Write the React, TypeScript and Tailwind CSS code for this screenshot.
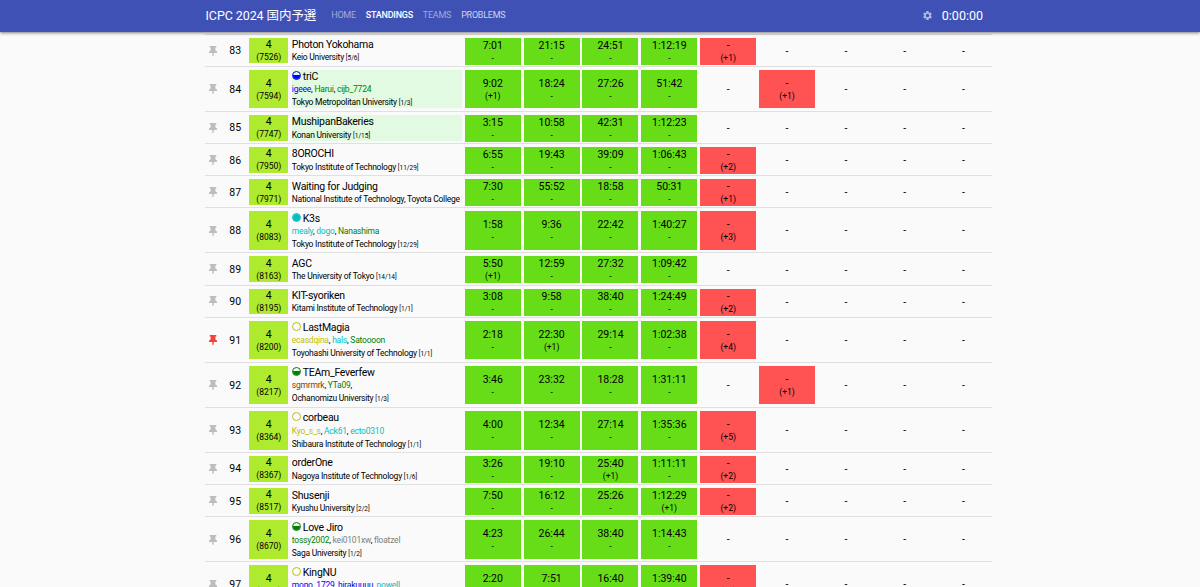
import clsx from 'clsx'

type Member = { name: string; color: string }

type Team = {
  rank: number
  penalty: number
  name: string
  university: string
  place: string
  rating?: { color: string; fill: number }
  members?: Member[]
  results: string[]
  pinned?: boolean
  highlight?: boolean
}

const BLUE = 'text-[#0000ff]'
const GREEN = 'text-[#008000]'
const CYAN = 'text-[#00c0c0]'
const YELLOW = 'text-[#c0c000]'
const BROWN = 'text-[#804000]'
const GRAY = 'text-[#808080]'

// results: "time" = solved, "time+n" = solved with n misses, "+n" = only misses, "" = untouched
const teams: Team[] = [
  { rank: 83, penalty: 7526, name: 'Photon Yokohama', university: 'Keio University', place: '5/6', results: ['7:01', '21:15', '24:51', '1:12:19', '+1'] },
  {
    rank: 84, penalty: 7594, name: 'triC', university: 'Tokyo Metropolitan University', place: '1/3', highlight: true,
    rating: { color: BLUE, fill: 0.7 },
    members: [{ name: 'igeee', color: BLUE }, { name: 'Harui', color: GREEN }, { name: 'cijb_7724', color: GREEN }],
    results: ['9:02+1', '18:24', '27:26', '51:42', '', '+1'],
  },
  { rank: 85, penalty: 7747, name: 'MushipanBakeries', university: 'Konan University', place: '1/15', highlight: true, results: ['3:15', '10:58', '42:31', '1:12:23'] },
  { rank: 86, penalty: 7950, name: '8OROCHI', university: 'Tokyo Institute of Technology', place: '11/29', results: ['6:55', '19:43', '39:09', '1:06:43', '+2'] },
  { rank: 87, penalty: 7971, name: 'Waiting for Judging', university: 'National Institute of Technology, Toyota College', place: '1/1', results: ['7:30', '55:52', '18:58', '50:31', '+1'] },
  {
    rank: 88, penalty: 8083, name: 'K3s', university: 'Tokyo Institute of Technology', place: '12/29',
    rating: { color: CYAN, fill: 1 },
    members: [{ name: 'mealy', color: CYAN }, { name: 'dogo', color: CYAN }, { name: 'Nanashima', color: GREEN }],
    results: ['1:58', '9:36', '22:42', '1:40:27', '+3'],
  },
  { rank: 89, penalty: 8163, name: 'AGC', university: 'The University of Tokyo', place: '14/14', results: ['5:50+1', '12:59', '27:32', '1:09:42'] },
  { rank: 90, penalty: 8195, name: 'KIT-syoriken', university: 'Kitami Institute of Technology', place: '1/1', results: ['3:08', '9:58', '38:40', '1:24:49', '+2'] },
  {
    rank: 91, penalty: 8200, name: 'LastMagia', university: 'Toyohashi University of Technology', place: '1/1', pinned: true,
    rating: { color: YELLOW, fill: 0 },
    members: [{ name: 'ecasdqina', color: YELLOW }, { name: 'hals', color: CYAN }, { name: 'Satoooon', color: GREEN }],
    results: ['2:18', '22:30+1', '29:14', '1:02:38', '+4'],
  },
  {
    rank: 92, penalty: 8217, name: 'TEAm_Feverfew', university: 'Ochanomizu University', place: '1/3',
    rating: { color: GREEN, fill: 0.6 },
    members: [{ name: 'sgmrmrk', color: BROWN }, { name: 'YTa09', color: GREEN }, { name: '', color: GRAY }],
    results: ['3:46', '23:32', '18:28', '1:31:11', '', '+1'],
  },
  {
    rank: 93, penalty: 8364, name: 'corbeau', university: 'Shibaura Institute of Technology', place: '1/1',
    rating: { color: YELLOW, fill: 0 },
    members: [{ name: 'Kyo_s_s', color: YELLOW }, { name: 'Ack61', color: CYAN }, { name: 'ecto0310', color: CYAN }],
    results: ['4:00', '12:34', '27:14', '1:35:36', '+5'],
  },
  { rank: 94, penalty: 8367, name: 'orderOne', university: 'Nagoya Institute of Technology', place: '1/6', results: ['3:26', '19:10', '25:40+1', '1:11:11', '+2'] },
  { rank: 95, penalty: 8517, name: 'Shusenji', university: 'Kyushu University', place: '2/2', results: ['7:50', '16:12', '25:26', '1:12:29+1', '+2'] },
  {
    rank: 96, penalty: 8670, name: 'Love Jiro', university: 'Saga University', place: '1/2',
    rating: { color: GREEN, fill: 0.6 },
    members: [{ name: 'tossy2002', color: GREEN }, { name: 'kei0101xw', color: GRAY }, { name: 'floatzel', color: GRAY }],
    results: ['4:23', '26:44', '38:40', '1:14:43'],
  },
  {
    rank: 97, penalty: 8779, name: 'KingNU', university: 'Nagoya University', place: '3/9',
    rating: { color: YELLOW, fill: 0 },
    members: [{ name: 'mono_1729', color: BLUE }, { name: 'hirakuuuu', color: BLUE }, { name: 'powell', color: CYAN }],
    results: ['2:20', '7:51', '16:40', '1:39:40', '+1'],
  },
]

const PROBLEMS = [0, 1, 2, 3, 4, 5, 6, 7, 8]

function PinIcon({ active }: { active?: boolean }) {
  return (
    <svg viewBox="0 0 8 10" className={clsx('h-[10px] w-2', active ? 'text-[#f44336]' : 'text-[#bdbdbd]')}>
      <path
        fill="currentColor"
        d="M.7 0h6.600v1.500H6.400v2.900L8 5.600v1.300H4.700v2.500L4 10l-.7-.6V6.900H0V5.600l1.600-1.200V1.500H.7z"
      />
    </svg>
  )
}

function SettingsIcon() {
  return (
    <svg viewBox="0 0 24 24" className="h-[11px] w-[11px] text-white/60">
      <path
        fill="currentColor"
        d="M19.140 12.940c.04-.3.060-.610.060-.940 0-.320-.020-.640-.070-.940l2.030-1.580c.180-.140.230-.410.120-.610l-1.920-3.320c-.120-.220-.370-.290-.590-.220l-2.390.960c-.5-.380-1.030-.7-1.620-.940l-.360-2.540c-.040-.240-.240-.410-.480-.410h-3.840c-.240 0-.430.170-.470.410l-.360 2.540c-.590.240-1.130.570-1.620.940l-2.390-.960c-.220-.080-.470 0-.590.220L2.740 8.870c-.120.210-.080.470.120.610l2.030 1.580c-.050.3-.090.630-.090.940s.020.640.070.940l-2.030 1.580c-.180.140-.230.410-.120.610l1.920 3.320c.120.220.370.290.590.220l2.390-.960c.5.380 1.030.7 1.620.940l.360 2.540c.050.240.240.410.480.410h3.840c.240 0 .440-.170.470-.410l.360-2.540c.590-.240 1.130-.560 1.620-.940l2.390.960c.220.080.470 0 .590-.220l1.920-3.320c.120-.220.070-.470-.120-.610zM12 15.600c-1.980 0-3.600-1.620-3.600-3.600s1.620-3.600 3.600-3.600 3.600 1.620 3.600 3.600-1.620 3.600-3.600 3.600z"
      />
    </svg>
  )
}

function RatingMark({ color, fill }: { color: string; fill: number }) {
  return (
    <span className={clsx('relative -top-[1.500px] mr-[2px] inline-block size-[9px] overflow-hidden rounded-full border align-middle', color)}>
      <span className="absolute inset-x-0 bottom-0 bg-current" style={{ height: `${fill * 100}%` }} />
    </span>
  )
}

function ResultCell({ result }: { result?: string }) {
  if (!result) {
    return <div className="flex items-center justify-center pt-px text-[10.500px]">-</div>
  }
  const [time, misses] = result.split('+')
  return (
    <div className={clsx('flex flex-col items-center justify-center', time ? 'bg-[#66dd17]' : 'bg-[#ff5252]')}>
      <div className="pt-px text-[10.500px] leading-[13px]">{time || '-'}</div>
      <div className="text-[8.500px] leading-[13px]">{misses ? `(+${misses})` : '-'}</div>
    </div>
  )
}

function TeamRow({ team }: { team: Team }) {
  return (
    <div
      className={clsx(
        'flex border-t border-[#e0e0e0] pt-[3px] pb-[2.500px]',
        team.members ? 'h-[45.100px]' : 'h-[32.150px]'
      )}
    >
      <div className="flex w-4 items-center justify-center">
        <PinIcon active={team.pinned} />
      </div>
      <div className="flex w-[27.700px] items-center justify-center pt-px text-[10.500px]">{team.rank}</div>
      <div className="flex w-[39.500px] flex-col items-center justify-center bg-[#aeea2e]">
        <div className="pt-px text-[10.500px] leading-[13px]">4</div>
        <div className="text-[8.500px] leading-[13px]">({team.penalty})</div>
      </div>
      <div
        className={clsx(
          'ml-[3.300px] flex w-[170.500px] flex-col justify-center overflow-hidden pt-[2.400px] whitespace-nowrap',
          team.highlight && 'bg-[#e1fae1]'
        )}
      >
        <div className="text-[10.500px] leading-[13.300px] tracking-[-0.280px]">
          {team.rating && <RatingMark {...team.rating} />}
          {team.name}
        </div>
        {team.members && (
          <div className="text-[8.500px] leading-[13px] tracking-[-0.220px]">
            {team.members.map((m, i) => (
              <span key={i}>
                {i > 0 && ', '}
                <span className={m.color}>{m.name}</span>
              </span>
            ))}
          </div>
        )}
        <div className="text-[8.500px] leading-[13px] tracking-[-0.240px]">
          {team.university} <span className="text-[6.500px] tracking-normal">[{team.place}]</span>
        </div>
      </div>
      <div className="ml-[2.500px] grid grid-cols-[repeat(9,56px)] gap-x-[2.850px]">
        {PROBLEMS.map((p) => (
          <ResultCell key={p} result={team.results[p]} />
        ))}
      </div>
    </div>
  )
}

export default function App() {
  return (
    <div className="flex h-[587px] flex-col overflow-hidden bg-[#fafafa] font-['Roboto','Noto_Sans_CJK_JP',sans-serif] text-black">
      {/* App bar */}
      <header className="z-10 h-8 shrink-0 bg-[#3f51b5] text-white shadow-[0_1px_3px_rgba(0,0,0,0.5)]">
        <div className="ml-[205.500px] flex h-[31px] w-[777.500px] items-center">
          <h1 className="pt-px text-[12.500px] tracking-[-0.080px]">ICPC 2024 国内予選</h1>
          <nav className="ml-[15px] flex gap-[10px] pt-px text-[9px] tracking-[-0.250px]">
            <a className="text-white/50">HOME</a>
            <a className="font-medium">STANDINGS</a>
            <a className="text-white/50">TEAMS</a>
            <a className="text-white/75">PROBLEMS</a>
          </nav>
          <div className="ml-auto flex items-center gap-[9px]">
            <SettingsIcon />
            <span className="pt-px text-[12.500px]">0:00:00</span>
          </div>
        </div>
      </header>

      {/* Standings */}
      <main className="ml-[205.300px] w-[787px] pt-[1.700px]">
        {teams.map((team) => (
          <TeamRow key={team.rank} team={team} />
        ))}
      </main>
    </div>
  )
}
